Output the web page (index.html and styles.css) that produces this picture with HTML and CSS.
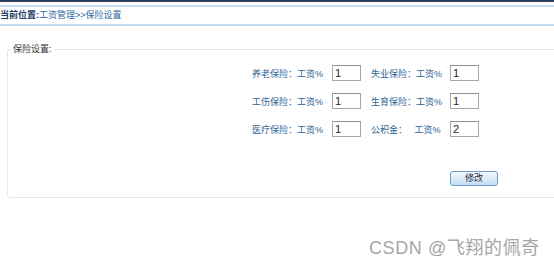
FILE: index.html
```html
<!DOCTYPE html>
<html lang="zh-CN">
<head>
<meta charset="utf-8">
<title>保险设置</title>
<link rel="stylesheet" href="styles.css">
</head>
<body>
<div class="topbar"></div>
<div class="crumb"><b class="crumb-title">当前位置:</b><span class="crumb-path">工资管理&gt;&gt;保险设置</span></div>
<fieldset class="panel">
  <legend class="panel-legend">保险设置:</legend>
  <div class="form">
    <label class="lbl">养老保险：工资%</label>
    <input class="inp" type="text" value="1">
    <span></span>
    <label class="lbl">失业保险：工资%</label>
    <input class="inp" type="text" value="1">

    <label class="lbl">工伤保险：工资%</label>
    <input class="inp" type="text" value="1">
    <span></span>
    <label class="lbl">生育保险：工资%</label>
    <input class="inp" type="text" value="1">

    <label class="lbl">医疗保险：工资%</label>
    <input class="inp" type="text" value="1">
    <span></span>
    <label class="lbl">公积金：&nbsp;&nbsp;&nbsp;工资%</label>
    <input class="inp" type="text" value="2">

    <button class="btn" type="button">修改</button>
  </div>
</fieldset>
<div class="watermark">CSDN @飞翔的佩奇</div>
</body>
</html>
```
FILE: styles.css
```css
html, body {
  margin: 0;
  padding: 0;
  background: #ffffff;
  overflow: hidden;
}
body {
  width: 554px;
  height: 262px;
  position: relative;
  font-family: "Liberation Sans", "Noto Sans CJK SC", sans-serif;
  font-size: 9px;
}
.topbar {
  height: 2px;
  background: #2f3d58;
}
.crumb {
  margin-top: 3px;
  height: 17px;
  line-height: 17px;
  border-top: 2px solid #c3dcf1;
  border-bottom: 2px solid #c3dcf1;
  white-space: nowrap;
}
.crumb-title {
  color: #1d3c63;
  font-weight: bold;
}
.crumb-path {
  color: #2f6aa3;
}
.panel {
  box-sizing: border-box;
  margin: 17px 0 0 7px;
  padding: 0 0 11px 0;
  width: 547px;
  min-width: 0;
  border: 1px solid #e2e8ee;
  border-right: none;
  border-radius: 3px 0 0 3px;
}
.panel-legend {
  margin-left: 3px;
  padding: 0 2px;
  line-height: 12px;
  color: #333333;
}
.form {
  display: grid;
  grid-template-columns: 80px 29px 10px 79px 29px;
  grid-template-rows: 16px 16px 16px auto;
  row-gap: 12px;
  margin: 10px 0 0 244px;
  align-items: center;
}
.lbl {
  color: #2b6396;
  white-space: nowrap;
}
.inp {
  box-sizing: border-box;
  width: 29px;
  height: 16px;
  margin: 0;
  padding: 0 2px;
  border: 1px solid #a3a8ae;
  border-top-color: #8d9298;
  font-family: "Liberation Sans", sans-serif;
  font-size: 11px;
  color: #1b1b3a;
  background: #ffffff;
}
.btn {
  grid-column: 5;
  grid-row: 4;
  margin-top: 22px;
  width: 48px;
  height: 15px;
  padding: 0;
  border: 1px solid #6a9ccf;
  border-radius: 3px;
  background: linear-gradient(#f3f8fd, #c5dcf3);
  font-family: "Liberation Sans", "Noto Sans CJK SC", sans-serif;
  font-size: 9px;
  line-height: 13px;
  color: #1f2f44;
}
.watermark {
  position: absolute;
  left: 369px;
  top: 233px;
  font-family: "Liberation Sans", "Noto Sans CJK SC", sans-serif;
  font-size: 18px;
  letter-spacing: 0.6px;
  color: #a6a6a6;
  white-space: nowrap;
}
```
